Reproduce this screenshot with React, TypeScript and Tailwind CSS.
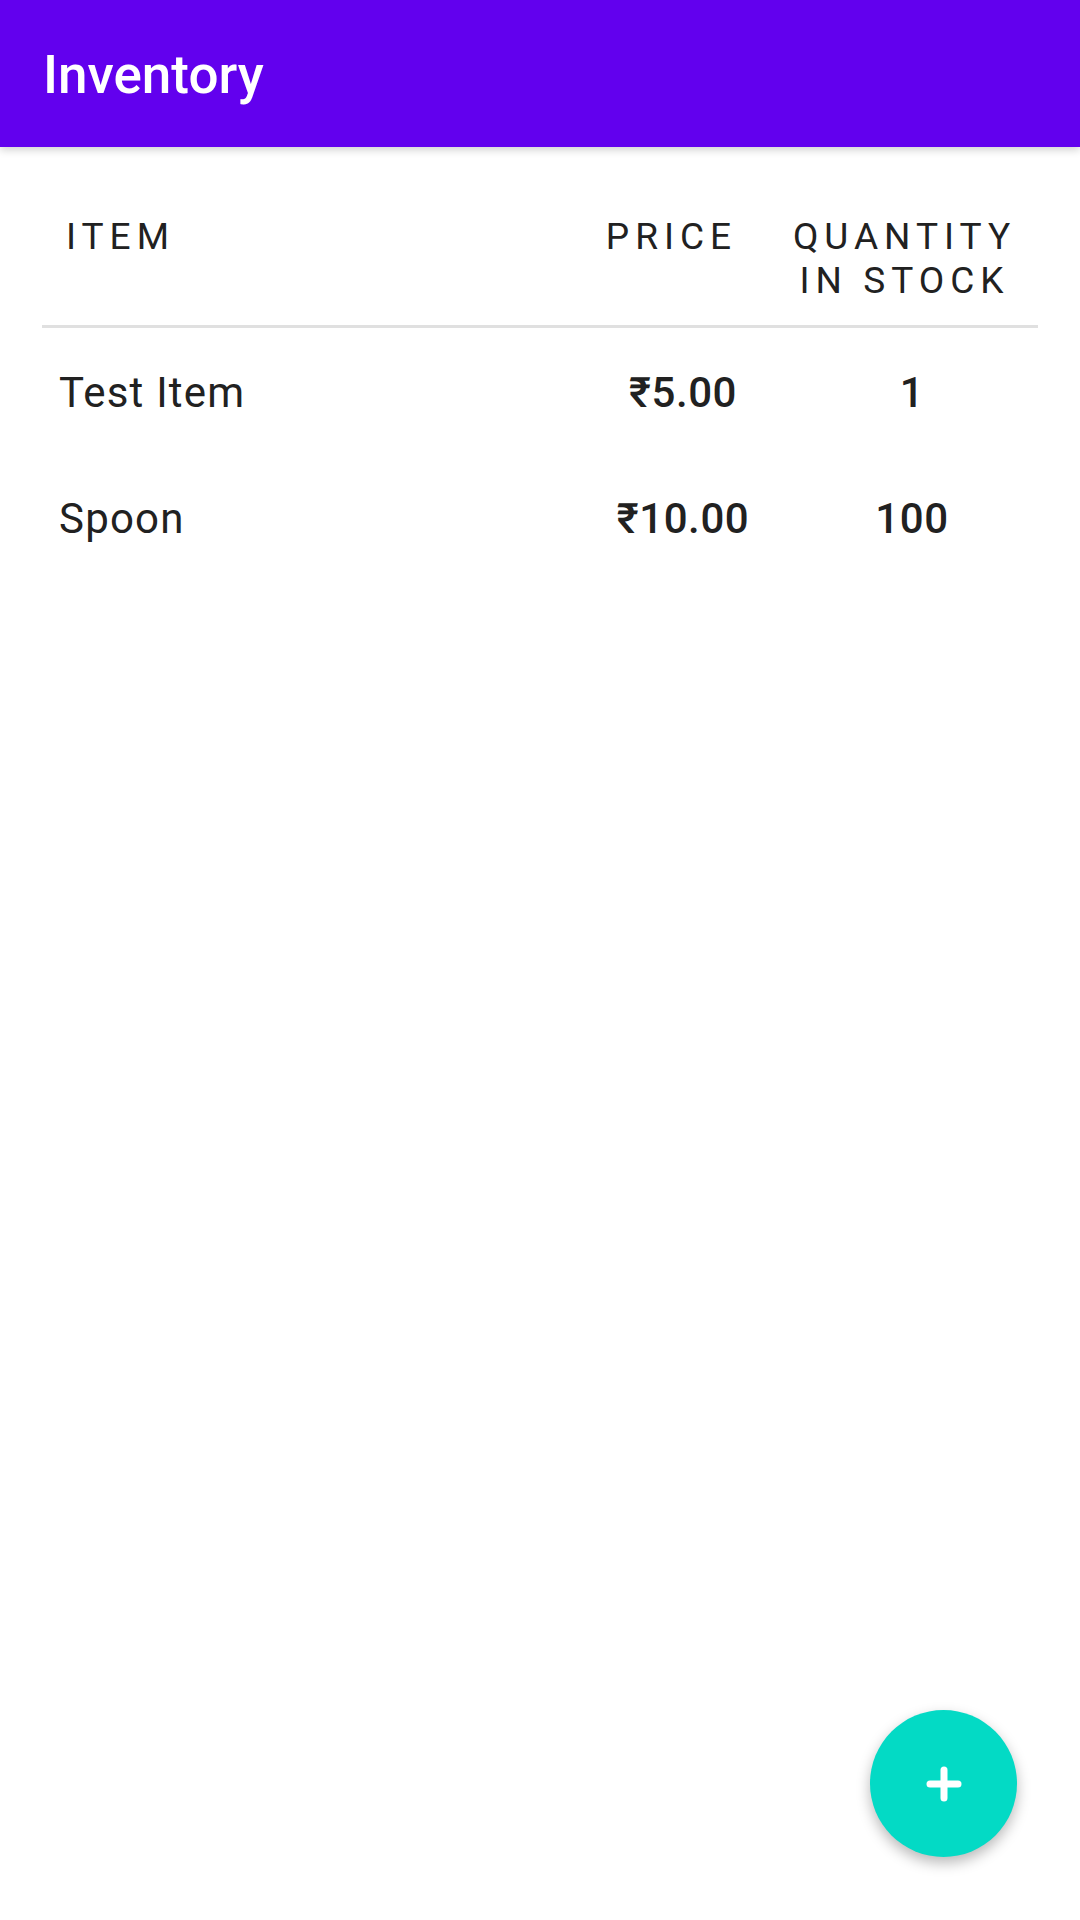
const items = [
  { name: 'Test Item', price: '₹5.00', qty: '1' },
  { name: 'Spoon', price: '₹10.00', qty: '100' },
];

const App = () => {
  return (
    <div
      className="relative w-[1080px] h-[1920px] bg-white overflow-hidden"
      style={{ fontFamily: 'Roboto, "Noto Sans", sans-serif' }}
    >
      {/* app bar */}
      <div className="relative z-10 h-[147px] bg-[#6200ee] flex items-center pl-[43px] shadow-[0_3px_8px_rgba(0,0,0,0.18)]">
        <h1 className="text-white text-[53px] font-medium leading-none pt-[4px]">Inventory</h1>
      </div>

      <div className="ml-[42px] w-[996px]">
        {/* table head */}
        <div className="flex items-start pt-[68px] pb-[22px] pr-[14px] text-[37px] leading-[44px] tracking-[6px] text-[#212121] border-b-[3px] border-[#e0e0e0]">
          <div className="flex-1 pl-[24px]">ITEM</div>
          <div className="w-[206px] text-center pr-[23px]">PRICE</div>
          <div className="w-[224px] ml-[14px] pr-[15px] flex flex-col items-center whitespace-nowrap">
            <span>QUANTITY</span>
            <span>IN STOCK</span>
          </div>
        </div>

        {/* rows */}
        {items.map((item, index) => (
          <div
            key={index}
            className="flex items-center pt-[40px] pb-[36px] pr-[14px] text-[42px] leading-[50px] tracking-[0.6px] text-[#212121]"
          >
            <div className="flex-1 pl-[17px] tracking-[1.2px]">{item.name}</div>
            <div className="w-[206px] text-center font-medium">{item.price}</div>
            <div className="w-[224px] ml-[14px] text-center font-medium">{item.qty}</div>
          </div>
        ))}
      </div>

      {/* fab */}
      <button className="absolute right-[63px] bottom-[63px] w-[147px] h-[147px] rounded-full bg-[#03dac5] flex items-center justify-center shadow-[0_6px_14px_rgba(0,0,0,0.28)]">
        <svg width="40" height="40" viewBox="0 0 40 40">
          <line x1="20" y1="6" x2="20" y2="34" stroke="white" strokeWidth="7" strokeLinecap="round" />
          <line x1="6" y1="20" x2="34" y2="20" stroke="white" strokeWidth="7" strokeLinecap="round" />
        </svg>
      </button>
    </div>
  );
};

export default App;
